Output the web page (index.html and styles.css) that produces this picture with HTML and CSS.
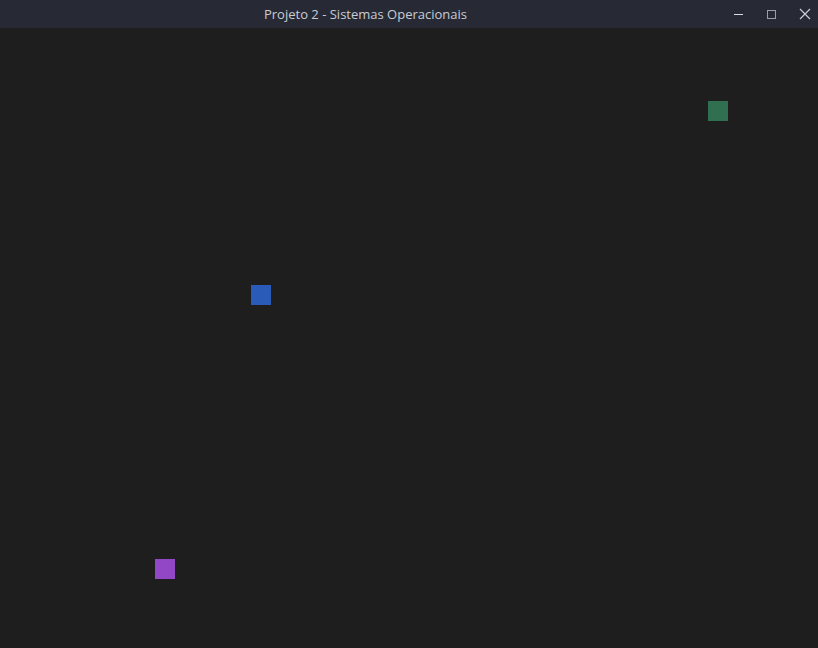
FILE: index.html
```html
<!DOCTYPE html>
<html lang="pt">
<head>
<meta charset="utf-8">
<title>Projeto 2 - Sistemas Operacionais</title>
<link rel="stylesheet" href="styles.css">
</head>
<body>
<div class="window">
  <header class="titlebar">
    <div class="title">Projeto 2 - Sistemas Operacionais</div>
    <div class="controls">
      <button class="ctl" aria-label="Minimizar">
        <svg width="11" height="11" viewBox="0 0 11 11"><path d="M1 5.5H10" stroke="#d7dbe3" stroke-width="1"/></svg>
      </button>
      <button class="ctl" aria-label="Maximizar">
        <svg width="11" height="11" viewBox="0 0 11 11"><rect x="1.5" y="1.5" width="8" height="8" fill="none" stroke="#9aa0ab" stroke-width="1"/></svg>
      </button>
      <button class="ctl" aria-label="Fechar">
        <svg width="12" height="12" viewBox="0 0 12 12"><path d="M1 1L11 11M11 1L1 11" stroke="#c9cdd6" stroke-width="1.2"/></svg>
      </button>
    </div>
  </header>
  <main class="canvas">
    <div class="proc green" style="left:708px;top:73px"></div>
    <div class="proc blue" style="left:251px;top:257px"></div>
    <div class="proc purple" style="left:155px;top:531px"></div>
  </main>
</div>
</body>
</html>
```

FILE: styles.css
```css
* { box-sizing: border-box; }
html, body { margin: 0; padding: 0; }
body { width: 818px; height: 648px; overflow: hidden; background: #1e1e1e; font-family: "Open Sans", "Noto Sans", sans-serif; }
.window { display: flex; flex-direction: column; height: 648px; }
.titlebar {
  height: 28px;
  background: #272a34;
  display: flex;
  align-items: center;
  flex: none;
}
.title { flex: 1; text-align: center; color: #c8ccd4; font-size: 13px; line-height: 28px; }
.controls {
  width: 87px;
  height: 28px;
  display: flex;
  align-items: center;
  gap: 18px;
  padding-right: 6px;
}
.ctl {
  background: none;
  border: 0;
  padding: 0;
  width: 15px;
  height: 28px;
  display: flex;
  align-items: center;
  justify-content: center;
}
.canvas { flex: 1; position: relative; background: #1e1e1e; }
.proc { position: absolute; width: 20px; height: 20px; }
.green { background: #306f4f; }
.blue { background: #2b5bb9; }
.purple { background: #9147c6; }
```
